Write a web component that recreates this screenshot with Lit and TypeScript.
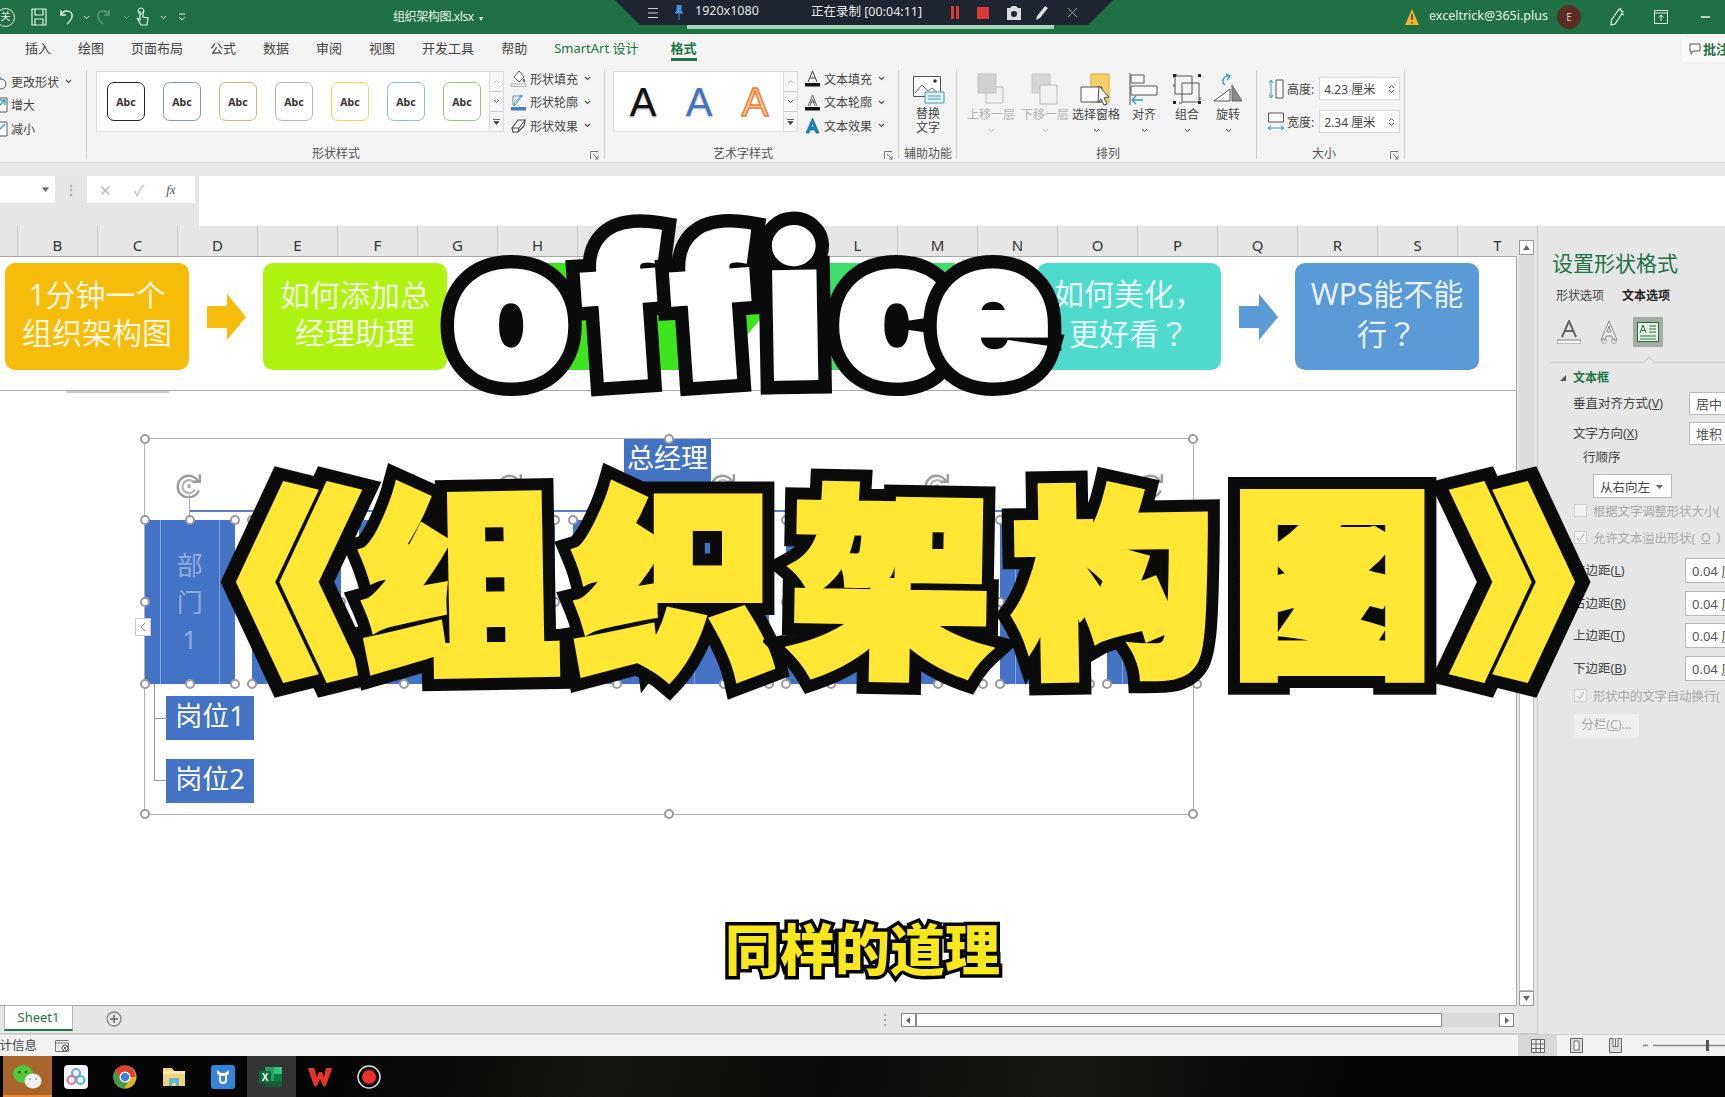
import { LitElement, html, css, svg } from 'lit';
import { customElement } from 'lit/decorators.js';

const chev = html`<svg class="chev" width="7" height="5" viewBox="0 0 7 5"><path d="M1 1l2.5 2.5L6 1" fill="none" stroke="#555" stroke-width="1.2"/></svg>`;

const TABS = ['插入', '绘图', '页面布局', '公式', '数据', '审阅', '视图', '开发工具', '帮助'];
const ABC = ['#222', '#7d9db5', '#d9b27c', '#b5b5b5', '#eed95c', '#8fc0cf', '#9cc28a'];
const COLS = 'BCDEFGHIJKLMNOPQRST'.split('');
const Q = html`<span class="q">？</span>`;

const BANNER = [
  { bg: '#f5bc0a', text: [html`1分钟一个`, html`组织架构图`] },
  { bg: '#aef20f', text: [html`如何添加总`, html`经理助理`] },
  { bg: '#3ee41e', text: [] },
  { bg: '#3fdc6e', text: [] },
  { bg: '#4edbce', text: [html`如何美化，`, html`更好看${Q}`] },
  { bg: '#5a9ad6', text: [html`WPS能不能`, html`行${Q}`] },
];

const OFFICE = [
  { c: 'o', w: 128, r: 0 },
  { c: 'f', w: 98, r: -4 },
  { c: 'f', w: 80, r: -4 },
  { c: 'i', w: 84, r: -1 },
  { c: 'c', w: 92, r: 0 },
  { c: 'e', w: 126, r: 0 },
];

const TITLE = [
  { c: '《', w: 146, x: -72, r: 0, s: 1.2 },
  { c: '组', w: 214, r: -1 },
  { c: '织', w: 216, r: 0 },
  { c: '架', w: 218, r: 1 },
  { c: '构', w: 226, r: -1 },
  { c: '图', w: 212, r: 0 },
  { c: '》', w: 146, x: 28, r: 0, s: 1.2 },
];

const HANDLES = ['tl', 'tc', 'tr', 'ml', 'mr', 'bl', 'bc', 'br'];

@customElement('app-root')
export class AppRoot extends LitElement {
  static styles = css`
    :host {
      display: block;
      position: relative;
      width: 1725px;
      height: 1097px;
      overflow: hidden;
      background: #f3f3f3;
      color: #444;
      font: 12px "Noto Sans", "Noto Sans CJK SC", sans-serif;
    }
    svg { display: block; flex: none; }

    /* title bar */
    .titlebar { height: 34px; background: #1f7145; color: #e6f0ea; display: flex; align-items: center; }
    .qat { display: grid; grid-template-columns: 31px 28px 24px 12px 28px 11px 26px 18px 20px; align-items: center; width: 198px; }
    .close-badge { width: 17px; height: 17px; margin-left: -4px; border: 1px solid #e6f0ea; border-radius: 50%; font-size: 10px; line-height: 15px; text-align: center; }
    .doc { margin-left: 195px; padding-bottom: 3px; font-size: 12px; letter-spacing: -0.4px; }
    .doc small { font-size: 8px; }
    .account { margin-left: auto; display: flex; align-items: center; height: 34px; }
    .mail { margin-left: 9px; padding-bottom: 3px; font-size: 12.5px; width: 128px; }
    .avatar { width: 24px; height: 24px; border-radius: 50%; background: #5b2e24; color: #d9c5c0; font-size: 10px; line-height: 24px; text-align: center; margin-right: 28px; }
    .account .i2 { margin-right: 29px; }
    .account .min { margin-right: 10px; }

    .recorder {
      position: absolute; left: 615px; top: 0; width: 498px; height: 25px; box-sizing: border-box;
      padding-left: 32px;
      background: #1e2531; color: #e8e8e8;
      clip-path: polygon(0 0, 100% 0, 95% 100%, 5% 100%);
      display: grid; grid-template-columns: 27px 21px 116px 139px 27px 29px 29px 32px 20px; align-items: center; font-size: 12.5px;
    }
    .recorder span { padding-bottom: 4px; }
    .rec-progress { position: absolute; left: 687px; top: 25px; width: 367px; height: 4px; background: #a7d4b8; }

    /* tabs */
    .tabs { height: 32px; box-sizing: border-box; padding: 0 0 5px 25px; display: flex; align-items: center; gap: 27px; font-size: 13px; color: #444; position: relative; }
    .tabs .sa { color: #217346; margin-right: 5px; }
    .tabs .on { color: #217346; font-weight: 700; position: relative; }
    .tabs .on::after { content: ''; position: absolute; left: 0; right: 0; bottom: -4px; height: 3px; background: #217346; }
    .comment { position: absolute; right: 0; top: 4px; width: 43px; height: 24px; background: #fafafa; display: flex; align-items: center; gap: 2px; padding: 0 0 3px 7px; box-sizing: border-box; color: #217346; font-weight: 700; overflow: hidden; white-space: nowrap; }

    /* ribbon */
    .ribbon { height: 97px; display: flex; box-sizing: border-box; border-bottom: 1px solid #dcdcdc; }
    .grp { position: relative; display: flex; flex-direction: column; box-sizing: border-box; }
    .grp::after { content: ''; position: absolute; right: 0; top: 4px; bottom: 3px; width: 1px; background: #cfcfcf; }
    .body { height: 80px; display: flex; box-sizing: border-box; }
    .lbl { height: 16px; line-height: 16px; text-align: center; color: #555; white-space: nowrap; }
    .lbl.m1 { margin-right: 20px; }
    .lbl.m2 { margin-right: 18px; }
    .lbl.m3 { margin-right: -2px; }
    .lbl.m4 { margin-right: 14px; }
    .launch { position: absolute; right: 6px; bottom: 2px; }
    .g1 { width: 87px; } .g2 { width: 518px; } .g3 { width: 294px; } .g4 { width: 58px; } .g5 { width: 300px; } .g6 { width: 148px; }
    .list { display: flex; flex-direction: column; }
    .li { height: 23.5px; display: flex; align-items: center; gap: 3px; white-space: nowrap; }
    .li .chev { margin-left: 3px; }
    .g1 .list { margin-top: 4px; margin-left: -8px; }
    .g1 .lbl { text-align: left; margin-left: -12px; }
    .g2 .body { padding: 5px 0 0 9px; }
    .g2 .list, .g3 .list { margin-top: -4px; margin-left: 6px; }
    .gal { height: 61px; background: #fff; border: 1px solid #dcdcdc; box-sizing: border-box; display: flex; align-items: center; }
    .g2 .gal { width: 394px; padding-left: 10px; gap: 18px; }
    .abc { width: 38px; height: 39px; box-sizing: border-box; border: 1.5px solid; border-radius: 7px; background: #fff; color: #333; font-size: 10.5px; font-weight: 700; display: flex; align-items: center; justify-content: center; }
    .spin { width: 14px; height: 61px; display: flex; flex-direction: column; box-sizing: border-box; border: 1px solid #dcdcdc; border-left: 0; }
    .spin span { flex: 1; border-bottom: 1px solid #ccc; display: flex; align-items: center; justify-content: center; background: #f7f7f7; }
    .spin span:last-child { border-bottom: 0; }
    .g3 .body { padding: 5px 0 0 8px; }
    .g3 .gal { width: 171px; padding-left: 1px; }
    .wa { width: 56px; text-align: center; font: 40px/1 "Liberation Sans", sans-serif; }
    .wa.k { color: #111; text-shadow: 0 1px 2px #777; }
    .wa.b { color: #4472c4; text-shadow: 0 1px 2px #aab; }
    .wa.o { color: #f7c7a3; -webkit-text-stroke: 1.5px #ed7d31; }
    .g4 .body { position: relative; }
    .stack { width: 58px; text-align: center; line-height: 14px; padding-top: 41px; box-sizing: border-box; }
    .alt { position: absolute; left: 14px; top: 10px; }
    .g5 .body { display: grid; grid-template-columns: 54px 54px 48px 48px 38px 44px; padding-left: 7px; }
    .cmd { position: relative; display: flex; flex-direction: column; align-items: center; white-space: nowrap; padding-top: 6px; }
    .cmd .ic { height: 34px; }
    .cmd .t { margin-top: 2px; line-height: 14px; }
    .cmd > svg:last-child { margin-top: 6px; }
    .cmd.off { color: #b4b4b4; }
    .g6 .body { flex-direction: column; gap: 10px; padding: 11px 0 0 11px; }
    .sz { display: flex; align-items: center; gap: 3px; height: 23px; }
    .num { width: 81px; height: 23px; margin-left: 2px; box-sizing: border-box; background: #fff; border: 1px solid #d8d8d8; display: flex; align-items: center; justify-content: space-between; padding: 0 4px; font-size: 12px; }

    .band { height: 13px; background: #e8e8e8; }
    .fbar { height: 50px; background: #e6e6e6; display: flex; align-items: flex-start; }
    .namebox { width: 55px; height: 27px; background: #fff; display: flex; align-items: center; justify-content: flex-end; padding-right: 6px; box-sizing: border-box; }
    .dots { width: 32px; text-align: center; color: #aaa; line-height: 27px; font-weight: 700; }
    .fx { width: 108px; height: 27px; background: #fff; display: flex; align-items: center; gap: 22px; padding-left: 12px; box-sizing: border-box; color: #bbb; font-size: 15px; }
    .fx i { color: #555; font: italic 13px "Liberation Serif", serif; }
    .finput { flex: 1; height: 50px; margin-left: 4px; background: #fff; }

    /* sheet */
    .main { height: 808px; display: flex; }
    .sheetcol { width: 1537px; display: flex; flex-direction: column; background: #e6e6e6; }
    .sheetrow { height: 780px; display: flex; }
    .cells { width: 1517px; display: flex; flex-direction: column; }
    .colhead { height: 30px; display: flex; padding-left: 17px; background: #e6e6e6; overflow: hidden; box-sizing: border-box; }
    .colhead span { flex: none; width: 80px; height: 30px; box-sizing: border-box; border-left: 1px solid #c6c6c6; text-align: center; line-height: 39px; font-size: 15px; color: #333; }
    .grid { flex: 1; position: relative; background: #fff; border-top: 1px solid #a8a8a8; border-right: 1px solid #a8a8a8; border-bottom: 1px solid #a8a8a8; box-sizing: border-box; }
    .banner { height: 134px; box-sizing: border-box; padding: 6px 0 0 5px; display: flex; border-bottom: 1px solid #aaa; }
    .bx { flex: none; width: 184px; height: 107px; box-sizing: border-box; padding-bottom: 5px; border-radius: 10px; display: flex; flex-direction: column; align-items: center; justify-content: center; color: rgba(255,255,255,.88); font-size: 30px; line-height: 38px; white-space: nowrap; }
    .q { font-family: "Noto Sans CJK TC", sans-serif; }
    .arrow { flex: none; width: 74px; height: 107px; display: flex; align-items: center; justify-content: center; }
    .tinyline { width: 103px; height: 2px; margin-left: 66px; background: #ccc; }

    .smart { position: relative; margin: 45px 0 0 144px; width: 1050px; height: 377px; box-sizing: border-box; border: 1px solid #b0b0b0; }
    .mgr { width: 87px; height: 43px; margin-left: 479px; background: #4472c4; color: #fff; font-size: 27px; line-height: 38px; text-align: center; white-space: nowrap; }
    .hline { position: absolute; left: 44px; right: 44px; top: 71px; height: 1.5px; background: #5b7fc0; }
    .depts { display: flex; gap: 17.4px; margin-top: 38px; }
    .dept { position: relative; flex: none; width: 89.5px; height: 164px; background: #4472c4; display: flex; flex-direction: column; align-items: center; justify-content: center; color: rgba(255,255,255,.42); font-size: 26px; line-height: 37px; }
    .dept::before, .dept::after { content: ''; position: absolute; top: 0; bottom: 0; width: 1px; background: rgba(255,255,255,.35); }
    .dept::before { left: 15px; }
    .dept::after { right: 15px; }
    .stem { position: absolute; left: 44px; top: -25px; width: 1px; height: 25px; background: #aaa; }
    .rot { position: absolute; left: 31px; top: -48px; }
    .hd { position: absolute; width: 10px; height: 10px; box-sizing: border-box; border: 2px solid #9a9a9a; border-radius: 50%; background: #fff; z-index: 1; }
    .tl, .ml, .bl { left: -5px; } .tr, .mr, .br { right: -5px; } .tc, .bc { left: calc(50% - 5px); }
    .tl, .tc, .tr { top: -5px; } .bl, .bc, .br { bottom: -5px; } .ml, .mr { top: calc(50% - 5px); }
    .posts { margin: 12px 0 0 21px; display: flex; flex-direction: column; gap: 19px; }
    .post { width: 88px; height: 44px; background: #4472c4; color: #fff; font-size: 27px; line-height: 39px; text-align: center; }
    .vconn { position: absolute; left: 9px; top: 245px; width: 12px; height: 97px; box-sizing: border-box; border-left: 1px solid #999; border-bottom: 1px solid #999; }
    .vconn::after { content: ''; position: absolute; left: 0; top: 34px; width: 12px; height: 1px; background: #999; }
    .collapse { position: absolute; left: -10px; top: 179px; width: 16px; height: 18px; box-sizing: border-box; background: #fff; border: 1px solid #ccc; display: flex; align-items: center; justify-content: center; z-index: 2; }

    .vbar { width: 20px; display: flex; flex-direction: column; box-sizing: border-box; padding: 14px 3px 0 2px; }
    .sbtn { width: 15px; height: 15px; box-sizing: border-box; border: 1px solid #999; background: #fff; display: flex; align-items: center; justify-content: center; flex: none; }
    .vtrack { height: 216px; background: #dcdcdc; }
    .vthumb { height: 520px; background: #fff; border: 1px solid #bdbdbd; box-sizing: border-box; }
    .sheettabs { height: 28px; display: flex; align-items: flex-start; border-bottom: 1px solid #c8c8c8; box-sizing: border-box; position: relative; }
    .sheet1 { margin-left: 4px; width: 69px; height: 25px; box-sizing: border-box; background: #fff; border: 1px solid #b5b5b5; border-top: 0; border-bottom: 2px solid #217346; color: #217346; font-size: 13px; text-align: center; line-height: 23px; }
    .add { margin: 5px 0 0 33px; }
    .hdots { margin-left: 762px; margin-top: 8px; }
    .hscroll { margin: 7px 0 0 14px; display: flex; align-items: stretch; height: 14px; }
    .hthumb { width: 526px; background: #fff; border: 1px solid #888; box-sizing: border-box; }
    .htrack { width: 57px; background: #dadada; }
    .hscroll .sbtn { height: 14px; border-color: #888; }

    /* right pane */
    .pane { width: 188px; box-sizing: border-box; border-left: 1px solid #c8c8c8; background: #e6e6e6; overflow: hidden; white-space: nowrap; color: #444; font-size: 12.5px; }
    .p-title { margin: 22px 0 0 14px; height: 30px; line-height: 30px; font-size: 21px; color: #217346; }
    .p-tabs { margin: 8px 0 0 18px; height: 20px; line-height: 20px; display: flex; gap: 18px; font-size: 12px; }
    .p-tabs b { color: #222; }
    .p-icons { margin: 11px 0 0 19px; height: 30px; display: flex; align-items: center; gap: 19px; }
    .p-icons .sel { width: 30px; height: 30px; background: #a4aba3; display: flex; align-items: center; justify-content: center; margin-left: -4px; }
    .p-hr { position: relative; margin: 15px 0 0 13px; height: 1px; background: #c9c9c9; }
    .p-hr::after { content: ''; position: absolute; left: 94px; top: -4px; width: 7px; height: 7px; background: #e6e6e6; border-left: 1px solid #c9c9c9; border-top: 1px solid #c9c9c9; transform: rotate(45deg); }
    .p-sec { margin: 5px 0 0 22px; height: 20px; line-height: 20px; display: flex; align-items: center; gap: 7px; color: #217346; font-weight: 700; font-size: 12px; }
    .fld { display: flex; align-items: center; margin-left: 35px; }
    .fld label { flex: none; padding-bottom: 2px; }
    .fld.a { margin-top: 7px; height: 23px; }
    .fld.a.first { margin-top: 4px; }
    .fld.a label { width: 116px; }
    .fld.m { margin-top: 7.5px; height: 25px; }
    .fld.m.first { margin-top: 13px; }
    .fld.m label { width: 112px; }
    .box { flex: none; width: 80px; height: 100%; box-sizing: border-box; background: #fff; border: 1px solid #b8b8b8; padding-left: 6px; display: flex; align-items: center; color: #555; font-size: 13px; }
    .order { margin: 6px 0 0 45px; height: 16px; line-height: 14px; }
    .sel-dd { margin: 7px 0 0 55px; width: 79px; height: 24px; box-sizing: border-box; background: #fff; border: 1px solid #b8b8b8; display: flex; align-items: center; justify-content: space-between; padding: 0 8px 0 6px; }
    .chk { display: flex; align-items: center; gap: 6px; height: 16px; margin-left: 36px; color: #aaa; letter-spacing: -0.2px; }
    .chk .c { width: 11px; height: 11px; flex: none; background: #f2f2f2; border: 1px solid #d0d0d0; display: flex; align-items: center; justify-content: center; }
    .chk.c1 { margin-top: 4px; } .chk.c2 { margin-top: 11px; } .chk.c3 { margin-top: 7px; }
    .colbtn { margin: 10px 0 0 36px; width: 65px; height: 24px; line-height: 22px; text-align: center; background: #efefef; color: #aaa; }

    /* status + taskbar */
    .status { height: 22px; background: #f2f2f2; display: flex; align-items: center; position: relative; border-top: 1px solid #cfcfcf; box-sizing: border-box; }
    .status .info { margin-left: -13px; width: 68px; white-space: nowrap; font-size: 12.5px; padding-bottom: 3px; }
    .views { margin-left: auto; display: flex; align-items: center; height: 21px; }
    .views .v { height: 21px; display: flex; align-items: center; justify-content: center; width: 39px; }
    .views .v.on { background: #d8d8d8; }
    .zoom { position: relative; width: 90px; height: 21px; }
    .taskbar { height: 41px; background: linear-gradient(100deg, #050505 20%, #14160f 35%, #0b0b09 48%, #161812 62%, #050505 78%); display: flex; align-items: center; padding-left: 3px; position: relative; }
    .tk { width: 48.8px; height: 41px; display: flex; align-items: center; justify-content: center; flex: none; }
    .tk.wx { background: #a8642a; box-shadow: inset 0 -2px 0 #e8862a; }
    .tk.xl { background: #353535; }

    /* big video captions */
    .cap { position: absolute; z-index: 5; font-family: "Noto Sans CJK SC", sans-serif; font-weight: 900; display: flex; }
    .ch { position: relative; display: block; flex: none; text-align: center; white-space: nowrap; }
    .ch::after { content: attr(data-t); position: absolute; left: 0; right: 0; top: 0; }
    .office { left: 447px; top: 193px; font-family: Inter, sans-serif; font-size: 190px; line-height: 230px; }
    .office .ch { color: #000; -webkit-text-stroke: 34px #0b0b0b; }
    .office .ch::after { color: #fff; -webkit-text-stroke: 7px #fff; }
    .title { left: 206px; top: 426px; font-size: 200px; line-height: 290px; }
    .title .ch { color: #000; -webkit-text-stroke: 34px #0b0b0b; }
    .title .ch::after { color: #ffe733; -webkit-text-stroke: 10px #ffe733; }
    .sub { left: 725px; top: 901px; font-size: 55px; line-height: 90px; }
    .sub .ch { color: #000; -webkit-text-stroke: 7px #000; }
    .sub .ch::after { color: #f6e71e; -webkit-text-stroke: 0; }
  `;

  private launcher() {
    return html`<svg class="launch" width="9" height="9" viewBox="0 0 9 9"><path d="M.5 8V.5H8M3 3l5 5M5 8h3V5" fill="none" stroke="#777"/></svg>`;
  }

  private up(c = '#666') {
    return html`<svg width="7" height="5" viewBox="0 0 7 5"><path d="M1 4l2.5-2.5L6 4" fill="none" stroke=${c}/></svg>`;
  }

  private down(c = '#444') {
    return html`<svg width="7" height="5" viewBox="0 0 7 5"><path d="M1 1l2.5 2.5L6 1" fill="none" stroke=${c}/></svg>`;
  }

  private tri(d: string) {
    return html`<svg width="7" height="7" viewBox="0 0 7 7"><path d=${d} fill="#666"/></svg>`;
  }

  private spinner() {
    return html`<div class="spin"><span>${this.up('#bbb')}</span><span>${this.down()}</span><span><svg width="7" height="6" viewBox="0 0 7 6"><path d="M0 .5h7M1 2.5l2.5 3 2.5-3z" stroke="#444" fill="#444" stroke-width=".8"/></svg></span></div>`;
  }

  private titleBar() {
    const white = '#e6f0ea';
    return html`
      <div class="titlebar">
        <div class="qat">
          <div class="close-badge">关</div>
          <svg width="16" height="18" viewBox="0 0 16 18"><path d="M1 1h14v16H1zM4 1v6h8V1M4 17v-6h8v6" fill="none" stroke=${white} stroke-width="1.2"/></svg>
          <svg width="16" height="18" viewBox="0 0 16 18"><path d="M2 7c3-6 12-5 11 2-.5 3-3 5-5 7M2 2v5h5" fill="none" stroke=${white} stroke-width="1.4"/></svg>
          <svg width="7" height="5" viewBox="0 0 7 5"><path d="M1 1l2.5 2.5L6 1" fill="none" stroke=${white}/></svg>
          <svg width="16" height="18" viewBox="0 0 16 18"><path d="M14 7C11 1 2 2 3 9c.5 3 3 5 5 7M14 2v5H9" fill="none" stroke="#5d9b7a" stroke-width="1.4"/></svg>
          <svg width="7" height="5" viewBox="0 0 7 5"><path d="M1 1l2.5 2.5L6 1" fill="none" stroke="#5d9b7a"/></svg>
          <svg width="16" height="20" viewBox="0 0 16 20"><circle cx="7" cy="4" r="3" fill="none" stroke=${white}/><path d="M6 4v9l-3-2 4 7h6l1-7-5-1V4" fill="none" stroke=${white} stroke-width="1.2"/></svg>
          <svg width="7" height="5" viewBox="0 0 7 5"><path d="M1 1l2.5 2.5L6 1" fill="none" stroke=${white}/></svg>
          <svg width="8" height="9" viewBox="0 0 8 9"><path d="M1 1h6M1 4l3 3 3-3" fill="none" stroke=${white}/></svg>
        </div>
        <div class="doc">组织架构图.xlsx&nbsp; <small>▾</small></div>
        <div class="account">
          <svg width="16" height="18" viewBox="0 0 16 18"><path d="M8 1l7 16H1z" fill="#f0b32a"/><path d="M8 6v6M8 14v1.5" stroke="#5b3a10" stroke-width="1.6"/></svg>
          <div class="mail">exceltrick@365i.plus</div>
          <div class="avatar">E</div>
          <svg class="i2" width="16" height="20" viewBox="0 0 16 20"><path d="M10 2l4 3-8 12-4 1 .5-5zM12 1l-1 3M15 8l-3-1" fill="none" stroke=${white} stroke-width="1.2"/></svg>
          <svg class="i2" width="14" height="14" viewBox="0 0 14 14"><path d="M.5.5h13v13H.5zM.5 3h13M7 11V5M4.5 7.5L7 5l2.5 2.5" fill="none" stroke=${white}/></svg>
          <svg class="min" width="18" height="2" viewBox="0 0 18 2"><path d="M4 1h9" stroke=${white} stroke-width="1.5"/></svg>
        </div>
      </div>
      <div class="recorder">
        <svg width="12" height="12" viewBox="0 0 12 12"><path d="M1 1.5h10M1 6h10M1 10.5h10" stroke="#ccc"/></svg>
        <svg width="10" height="15" viewBox="0 0 10 15"><path d="M3 0h4v6l2 2H1l2-2zM5 8v7" fill="#4a90e2" stroke="#4a90e2"/></svg>
        <span>1920x1080</span>
        <span>正在录制 [00:04:11]</span>
        <svg width="10" height="13" viewBox="0 0 10 13"><path d="M1 0h3v13H1zM6 0h3v13H6z" fill="#d8383a"/></svg>
        <svg width="12" height="12" viewBox="0 0 12 12"><path d="M0 0h12v12H0z" fill="#d8383a"/></svg>
        <svg width="16" height="14" viewBox="0 0 16 14"><path d="M1 2h3l2-2h4l2 2h3v12H1z" fill="#ddd"/><circle cx="8" cy="8" r="3" fill="#1e2531"/></svg>
        <svg width="14" height="16" viewBox="0 0 14 16"><path d="M10 1l3 2-8 10-4 2 1-4z" fill="#ddd"/></svg>
        <svg width="11" height="11" viewBox="0 0 11 11"><path d="M1 1l9 9M10 1l-9 9" stroke="#aaa"/></svg>
      </div>
      <div class="rec-progress"></div>`;
  }

  private tabs() {
    return html`
      <div class="tabs">
        ${TABS.map((t) => html`<span>${t}</span>`)}
        <span class="sa">SmartArt 设计</span>
        <span class="on">格式</span>
        <div class="comment">
          <svg width="12" height="12" viewBox="0 0 12 12"><path d="M1 1h10v7H4L2 11V8H1z" fill="none" stroke="#555"/></svg>批注
        </div>
      </div>`;
  }

  private ribbon() {
    return html`
      <div class="ribbon">
        <div class="grp g1">
          <div class="body">
            <div class="list">
              <div class="li"><svg width="16" height="16" viewBox="0 0 16 16"><circle cx="9" cy="10" r="5" fill="none" stroke="#555"/><path d="M7 1l3 4H4z" fill="#5b9bd5"/></svg>更改形状 ${chev}</div>
              <div class="li"><svg width="16" height="16" viewBox="0 0 16 16"><path d="M1 1h14v14H1z" fill="#fff" stroke="#555"/><path d="M3 13L13 3M8 3h5v5" fill="none" stroke="#3a9ab8" stroke-width="1.4"/></svg>增大</div>
              <div class="li"><svg width="16" height="16" viewBox="0 0 16 16"><path d="M1 1h14v14H1z" fill="#fff" stroke="#555"/><path d="M13 3L3 13M8 13H3V8" fill="none" stroke="#3a9ab8" stroke-width="1.4"/></svg>减小</div>
            </div>
          </div>
          <div class="lbl">状</div>
        </div>

        <div class="grp g2">
          <div class="body">
            <div class="gal">${ABC.map((c) => html`<div class="abc" style="border-color:${c}">Abc</div>`)}</div>
            ${this.spinner()}
            <div class="list">
              <div class="li"><svg width="17" height="17" viewBox="0 0 17 17"><path d="M9 1l5 6-5 5-5-5zM14 9c1 1.500 1 3 0 3s-1-1.500 0-3" fill="#fff" stroke="#555"/><path d="M1 14h15v2.500H1z" fill="#f4f4f4" stroke="#999" stroke-width=".7"/></svg>形状填充 ${chev}</div>
              <div class="li"><svg width="17" height="17" viewBox="0 0 17 17"><path d="M3 2h10M3 2v9M12 2l-6 8-2 2 .5-3 7-8z" fill="none" stroke="#5b8fc9"/><path d="M1 13h15v3.500H1z" fill="#4a7fc0"/></svg>形状轮廓 ${chev}</div>
              <div class="li"><svg width="17" height="17" viewBox="0 0 17 17"><path d="M2 11l6-8h7l-1 6-6 6H3z" fill="#fff" stroke="#444" stroke-width="1.2"/><path d="M2 11h7l6-8M9 11l-1 4" fill="none" stroke="#444"/></svg>形状效果 ${chev}</div>
            </div>
          </div>
          <div class="lbl m1">形状样式</div>
          ${this.launcher()}
        </div>

        <div class="grp g3">
          <div class="body">
            <div class="gal"><span class="wa k">A</span><span class="wa b">A</span><span class="wa o">A</span></div>
            ${this.spinner()}
            <div class="list">
              <div class="li"><svg width="17" height="17" viewBox="0 0 17 17"><path d="M4 12L8.500 1 13 12M6 8h5" fill="none" stroke="#444"/><path d="M1 13h15v3.500H1z" fill="#111"/></svg>文本填充 ${chev}</div>
              <div class="li"><svg width="17" height="17" viewBox="0 0 17 17"><path d="M4 12L8.500 1 13 12M6 8h5M6 12l2.500-7 2.500 7" fill="none" stroke="#666"/><path d="M1 13h15v3.500H1z" fill="#111"/></svg>文本轮廓 ${chev}</div>
              <div class="li"><svg width="17" height="17" viewBox="0 0 17 17"><path d="M2 16L8.500 1 15 16h-3l-1-3H6l-1 3zM7 10h3L8.500 6z" fill="#1f88b8" stroke="#0c5f88" stroke-width=".7"/></svg>文本效果 ${chev}</div>
            </div>
          </div>
          <div class="lbl m2">艺术字样式</div>
          ${this.launcher()}
        </div>

        <div class="grp g4">
          <div class="body">
            <div class="stack">替换<br />文字</div>
            <svg class="alt" width="32" height="28" viewBox="0 0 32 28"><path d="M.5.500h27v20H.500z" fill="#fff" stroke="#555"/><path d="M2 17l7-8 6 6 4-3 7 6" fill="none" stroke="#666"/><circle cx="22" cy="5" r="1.800" fill="#333"/><path d="M12 16h19v11H12z" fill="#e6f3f7" stroke="#3a9ab8"/><path d="M15 20h13M15 23h13" stroke="#3a9ab8"/></svg>
          </div>
          <div class="lbl">辅助功能</div>
        </div>

        <div class="grp g5">
          <div class="body">
            <div class="cmd off">
              <svg class="ic" width="30" height="32" viewBox="0 0 30 32"><path d="M10 14h17v16H10z" fill="#f1f1f1" stroke="#bbb"/><path d="M2 1h18v19H2z" fill="#d0d0d0" stroke="#c2c2c2"/></svg>
              <div class="t">上移一层</div>${this.down('#bbb')}
            </div>
            <div class="cmd off">
              <svg class="ic" width="30" height="32" viewBox="0 0 30 32"><path d="M2 1h18v19H2z" fill="#d6d6d6" stroke="#c8c8c8"/><path d="M10 12h17v19H10z" fill="#f1f1f1" stroke="#bbb"/></svg>
              <div class="t">下移一层</div>${this.down('#bbb')}
            </div>
            <div class="cmd">
              <svg class="ic" width="32" height="32" viewBox="0 0 32 32"><path d="M11 1h18v28H11z" fill="#f9cf6b" stroke="#d9a73a"/><path d="M1 14h21v15H1z" fill="#fafafa" stroke="#555"/><path d="M19 13l10 11-5 1 3 6-3 1-3-6-3 4z" fill="#fff" stroke="#444"/></svg>
              <div class="t">选择窗格</div>${this.down()}
            </div>
            <div class="cmd">
              <svg class="ic" width="30" height="32" viewBox="0 0 30 32"><path d="M1 0v32" stroke="#555"/><path d="M2 2h13v8H2zM2 13h26v9H2z" fill="#fafafa" stroke="#555"/><path d="M14 27H3M7 23l-4 4 4 4" fill="none" stroke="#3a9ab8" stroke-width="1.300"/></svg>
              <div class="t">对齐</div>${this.down()}
            </div>
            <div class="cmd">
              <svg class="ic" width="30" height="32" viewBox="0 0 30 32"><path d="M2 2h26v28H2z" fill="none" stroke="#444" stroke-dasharray="3 21"/><path d="M3 3h17v18H3zM10 10h17v19H10z" fill="none" stroke="#555"/><path d="M1 1h3v3H1zM26 1h3v3h-3zM1 28h3v3H1zM26 28h3v3h-3z" fill="#222"/></svg>
              <div class="t">组合</div>${this.down()}
            </div>
            <div class="cmd">
              <svg class="ic" width="32" height="32" viewBox="0 0 32 32"><path d="M20 12l10 16H20z" fill="#888" stroke="#666"/><path d="M18 16v12H2z" fill="#fff" stroke="#555"/><path d="M18 3c-7-1-9 6-5 9M14 1l4 2-3 4" fill="none" stroke="#3a9ab8" stroke-width="1.400"/></svg>
              <div class="t">旋转</div>${this.down()}
            </div>
          </div>
          <div class="lbl m3">排列</div>
        </div>

        <div class="grp g6">
          <div class="body">
            <div class="sz">
              <svg width="16" height="20" viewBox="0 0 16 20"><path d="M8 1h7v18H8z" fill="#fafafa" stroke="#555"/><path d="M3 2v16M1 4l2-3 2 3M1 16l2 3 2-3" fill="none" stroke="#3a9ab8"/></svg>
              高度:<div class="num">4.23 厘米 <span>${this.up()}${this.down()}</span></div>
            </div>
            <div class="sz">
              <svg width="16" height="20" viewBox="0 0 16 20"><path d="M.5 1h15v9H.500z" fill="#fafafa" stroke="#555"/><path d="M1 16h14M3 14l-3 2 3 2M13 14l3 2-3 2" fill="none" stroke="#3a9ab8"/></svg>
              宽度:<div class="num">2.34 厘米 <span>${this.up()}${this.down()}</span></div>
            </div>
          </div>
          <div class="lbl m4">大小</div>
          ${this.launcher()}
        </div>
      </div>`;
  }

  private formulaBar() {
    return html`
      <div class="band"></div>
      <div class="fbar">
        <div class="namebox">${this.tri('M0 1.500h7L3.500 6z')}</div>
        <div class="dots">⋮</div>
        <div class="fx"><span>✕</span><span>✓</span><i>fx</i></div>
        <div class="finput"></div>
      </div>`;
  }

  private arrowIcon(color: string) {
    return html`<svg width="39" height="46" viewBox="0 0 39 46"><path d="M0 12h20V0l19 23-19 23V34H0z" fill=${color}/></svg>`;
  }

  private banner() {
    return html`
      <div class="banner">
        ${BANNER.map(
          (b, i) => html`
            <div class="bx" style="background:${b.bg}">${b.text.map((t) => html`<div>${t}</div>`)}</div>
            ${i < BANNER.length - 1 ? html`<div class="arrow">${this.arrowIcon(i === 4 ? '#5a9ad6' : b.bg)}</div>` : ''}
          `,
        )}
      </div>
      <div class="tinyline"></div>`;
  }

  private handles() {
    return HANDLES.map((h) => html`<span class="hd ${h}"></span>`);
  }

  private smartArt() {
    const rot = svg`<path d="M20 8A10 10 0 1 0 21 17M22 2v7h-7" fill="none" stroke="#9a9a9a" stroke-width="2.200"/><path d="M16 9a6 6 0 1 0 1.500 7" fill="none" stroke="#b4b4b4" stroke-width="2"/><circle cx="12" cy="13" r="2" fill="#b4b4b4"/>`;
    return html`
      <div class="smart">
        ${this.handles()}
        <div class="mgr">总经理</div>
        <div class="hline"></div>
        <div class="depts">
          ${Array.from({ length: 10 }, (_, i) => html`
            <div class="dept">
              <span class="stem"></span>
              <svg class="rot" width="26" height="26" viewBox="0 0 24 24">${rot}</svg>
              ${this.handles()}
              <span>部</span><span>门</span><span>${i + 1}</span>
            </div>`)}
        </div>
        <div class="vconn"></div>
        <div class="collapse"><svg width="6" height="10" viewBox="0 0 6 10"><path d="M5 1L1 5l4 4" fill="none" stroke="#888"/></svg></div>
        <div class="posts"><div class="post">岗位1</div><div class="post">岗位2</div></div>
      </div>`;
  }

  private sheet() {
    return html`
      <div class="sheetcol">
        <div class="sheetrow">
          <div class="cells">
            <div class="colhead">${COLS.map((c) => html`<span>${c}</span>`)}</div>
            <div class="grid">${this.banner()}${this.smartArt()}</div>
          </div>
          <div class="vbar">
            <div class="sbtn">${this.tri('M3.500 1L7 6H0z')}</div>
            <div class="vtrack"></div>
            <div class="vthumb"></div>
            <div class="sbtn">${this.tri('M0 1h7L3.500 6z')}</div>
          </div>
        </div>
        <div class="sheettabs">
          <div class="sheet1">Sheet1</div>
          <svg class="add" width="16" height="16" viewBox="0 0 16 16"><circle cx="8" cy="8" r="7" fill="none" stroke="#888" stroke-width="1.300"/><path d="M8 4v8M4 8h8" stroke="#666" stroke-width="1.500"/></svg>
          <svg class="hdots" width="3" height="12" viewBox="0 0 3 12"><path d="M0 0h2v2H0zM0 5h2v2H0zM0 10h2v2H0z" fill="#aaa"/></svg>
          <div class="hscroll">
            <div class="sbtn">${this.tri('M5 0v7L1 3.500z')}</div>
            <div class="hthumb"></div>
            <div class="htrack"></div>
            <div class="sbtn">${this.tri('M2 0v7l4-3.500z')}</div>
          </div>
        </div>
      </div>`;
  }

  private pane() {
    const tick = html`<svg width="9" height="9" viewBox="0 0 9 9"><path d="M1 5l2.500 2.500L8 1" fill="none" stroke="#aaa"/></svg>`;
    return html`
      <div class="pane">
        <div class="p-title">设置形状格式</div>
        <div class="p-tabs"><span>形状选项</span><b>文本选项</b></div>
        <div class="p-icons">
          <svg width="24" height="24" viewBox="0 0 24 24"><path d="M5 17L12 1l7 16M8 11h8" fill="none" stroke="#666" stroke-width="2"/><path d="M0 20h24v4H0z" fill="#f5f5f5" stroke="#888"/></svg>
          <svg width="18" height="24" viewBox="0 0 18 24"><path d="M1 20L9 1l8 19h-4l-1-4H6l-1 4zM7 12h4L9 6z" fill="#f0f0f0" stroke="#888"/><circle cx="4" cy="21" r="2.500" fill="none" stroke="#aaa"/><circle cx="14" cy="21" r="2.500" fill="none" stroke="#aaa"/></svg>
          <div class="sel"><svg width="22" height="20" viewBox="0 0 22 20"><path d="M.5.500h21v19H.500z" fill="#e9f0e4" stroke="#2b6a45"/><path d="M3 11l3-8 3 8M4 8.500h4" fill="none" stroke="#217346"/><path d="M12 4h7M12 7h7M12 10h7M3 14h16M3 17h16" stroke="#217346"/></svg></div>
        </div>
        <div class="p-hr"></div>
        <div class="p-sec"><svg width="6" height="6" viewBox="0 0 6 6"><path d="M6 0v6H0z" fill="#555"/></svg>文本框</div>
        <div class="fld a first"><label>垂直对齐方式(<u>V</u>)</label><div class="box">居中</div></div>
        <div class="fld a"><label>文字方向(<u>X</u>)</label><div class="box">堆积</div></div>
        <div class="order">行顺序</div>
        <div class="sel-dd">从右向左 ${this.tri('M0 2h7L3.500 6z')}</div>
        <div class="chk c1"><span class="c"></span>根据文字调整形状大小(<u>F</u>)</div>
        <div class="chk c2"><span class="c">${tick}</span>允许文本溢出形状(<u>O</u>)</div>
        <div class="fld m first"><label>左边距(<u>L</u>)</label><div class="box">0.04 厘米</div></div>
        <div class="fld m"><label>右边距(<u>R</u>)</label><div class="box">0.04 厘米</div></div>
        <div class="fld m"><label>上边距(<u>T</u>)</label><div class="box">0.04 厘米</div></div>
        <div class="fld m"><label>下边距(<u>B</u>)</label><div class="box">0.04 厘米</div></div>
        <div class="chk c3"><span class="c">${tick}</span>形状中的文字自动换行(<u>W</u>)</div>
        <div class="colbtn">分栏(<u>C</u>)...</div>
      </div>`;
  }

  private statusBar() {
    return html`
      <div class="status">
        <div class="info">统计信息</div>
        <svg width="14" height="13" viewBox="0 0 14 13"><path d="M.5 1.500h13M.5 4h13v8.500H.500zM.5 1.500V4" fill="#eee" stroke="#777"/><circle cx="10" cy="9" r="3" fill="#fff" stroke="#555"/><circle cx="10" cy="9" r="1" fill="#333"/></svg>
        <div class="views">
          <div class="v on"><svg width="14" height="14" viewBox="0 0 14 14"><path d="M.5.500h13v13H.500zM.5 5h13M.5 9.500h13M5 .500v13M9.500.500v13" fill="#eee" stroke="#666"/></svg></div>
          <div class="v"><svg width="13" height="15" viewBox="0 0 13 15"><path d="M.5.500h12v14H.500z" fill="#ddd" stroke="#666"/><path d="M4 3h5v9H4z" fill="#fff" stroke="#666"/></svg></div>
          <div class="v"><svg width="13" height="15" viewBox="0 0 13 15"><path d="M.5.500h12v14H.500z" fill="#ddd" stroke="#666"/><path d="M4 .500v8h5v-8M6.500.500v8" fill="#fff" stroke="#666"/></svg></div>
          <div class="zoom"><svg width="90" height="21" viewBox="0 0 90 21"><path d="M8 10.500h5M18 10.500h72" stroke="#888" stroke-width="1.500"/><path d="M71 5h3v11h-3z" fill="#555"/></svg></div>
        </div>
      </div>`;
  }

  private taskbar() {
    return html`
      <div class="taskbar">
        <div class="tk wx"><svg width="30" height="26" viewBox="0 0 30 26"><ellipse cx="11" cy="10" rx="10" ry="9" fill="#4fc73a"/><ellipse cx="21" cy="17" rx="8.500" ry="7.500" fill="#f1f1f1"/><circle cx="7.500" cy="8" r="1.300" fill="#1d6b13"/><circle cx="14" cy="8" r="1.300" fill="#1d6b13"/><circle cx="18" cy="15" r="1" fill="#999"/><circle cx="24" cy="15" r="1" fill="#999"/></svg></div>
        <div class="tk"><svg width="24" height="24" viewBox="0 0 24 24"><rect width="24" height="24" rx="4" fill="#f4f6fa"/><circle cx="12" cy="8" r="4" fill="none" stroke="#6fa8e8" stroke-width="2.200"/><circle cx="7.500" cy="15" r="4" fill="none" stroke="#e86f9a" stroke-width="2.200"/><circle cx="16.500" cy="15" r="4" fill="none" stroke="#4fbdd0" stroke-width="2.200"/></svg></div>
        <div class="tk"><svg width="24" height="24" viewBox="0 0 24 24"><circle cx="12" cy="12" r="11.500" fill="#e0b42a"/><path d="M12 .500A11.500 11.500 0 0 0 2 6l5 9 5-3h10.500A11.500 11.500 0 0 0 12 .500z" fill="#d9432f"/><path d="M2 6a11.500 11.500 0 0 0 9 17.500l5-8-4 .5-4-1z" fill="#4a9a44"/><circle cx="12" cy="12" r="5.500" fill="#fff"/><circle cx="12" cy="12" r="4.300" fill="#3f7fe0"/></svg></div>
        <div class="tk"><svg width="22" height="20" viewBox="0 0 22 20"><path d="M0 1h9l2 3h11v15H0z" fill="#f2d27a"/><path d="M0 4h22v3H0z" fill="#f8e6ae"/><path d="M6 11h10v8h-3v-3H9v3H6z" fill="#5db7d8"/></svg></div>
        <div class="tk"><svg width="24" height="24" viewBox="0 0 24 24"><rect width="24" height="24" rx="3" fill="#3584dc"/><path d="M6 5v4l2 1v5a4 4 0 0 0 8 0v-5l2-1V5l-4 3h-4z" fill="#fff"/><path d="M10 11v4a2 2 0 0 0 4 0v-4z" fill="#3584dc"/></svg></div>
        <div class="tk xl"><svg width="24" height="22" viewBox="0 0 24 22"><path d="M6 1h17v20H6z" fill="#21a366"/><path d="M15 1h8v7h-8z" fill="#33c481"/><path d="M15 8h8v7h-8z" fill="#107c41"/><path d="M6 15h17v6H6z" fill="#185c37"/><rect y="5" width="12" height="12" rx="1" fill="#0f6b3a"/><text x="6" y="14.500" font-size="10" font-weight="700" fill="#fff" text-anchor="middle" font-family="Liberation Sans">X</text></svg></div>
        <div class="tk"><svg width="24" height="20" viewBox="0 0 24 20"><path d="M0 1h6l3 9 2-5h3l2 5 2-9h6l-6 18h-3l-3-7-3 7H6z" fill="#e5342a"/></svg></div>
        <div class="tk"><svg width="24" height="24" viewBox="0 0 24 24"><circle cx="12" cy="12" r="11" fill="none" stroke="#ddd" stroke-width="1.500"/><circle cx="12" cy="12" r="7" fill="#e8312c"/></svg></div>
      </div>`;
  }

  private captions() {
    const glyph = (g: { c: string; w: number; x?: number; r: number; s?: number }) =>
      html`<span class="ch" data-t=${g.c} style="width:${g.w}px;transform:translateX(${g.x ?? 0}px) rotate(${g.r}deg) scaleX(${g.s ?? 1})">${g.c}</span>`;
    return html`
      <div class="cap office">${OFFICE.map(glyph)}</div>
      <div class="cap title">${TITLE.map(glyph)}</div>
      <div class="cap sub">${'同样的道理'.split('').map((c) => html`<span class="ch" data-t=${c}>${c}</span>`)}</div>`;
  }

  render() {
    return html`
      ${this.titleBar()} ${this.tabs()} ${this.ribbon()} ${this.formulaBar()}
      <div class="main">${this.sheet()} ${this.pane()}</div>
      ${this.statusBar()} ${this.taskbar()} ${this.captions()}
    `;
  }
}
